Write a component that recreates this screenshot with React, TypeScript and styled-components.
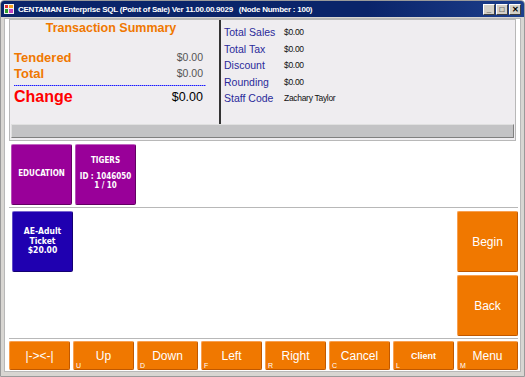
import type { FC } from 'react'
import styled, { createGlobalStyle } from 'styled-components'

const GlobalStyle = createGlobalStyle`
  html, body {
    margin: 0;
    padding: 0;
    background: #ffffff;
    font-family: "Liberation Sans", Arial, sans-serif;
  }
`

const Window = styled.div`
  width: 525px;
  height: 377px;
  box-sizing: border-box;
  display: flex;
  flex-direction: column;
  background: #d8d6d2;
  border: 1px solid #9a9a9a;
  border-radius: 4px 4px 0 0;
  overflow: hidden;
`

const TitleBar = styled.div`
  height: 16px;
  flex: none;
  display: flex;
  align-items: center;
  padding: 0 3px 0 3px;
  gap: 4px;
  background: linear-gradient(90deg, #0a246a 0%, #0a246a 70%, #1d3f8c 100%);
  color: #ffffff;
  font-family: "Liberation Sans", Arial, sans-serif;
  font-weight: bold;
  font-size: 8px;
  letter-spacing: -0.25px;
  white-space: pre;
`

const TitleText = styled.span`
  flex: 1;
`

const WinButtons = styled.div`
  display: flex;
  gap: 1px;
`

const WinButton = styled.div`
  width: 10px;
  height: 9px;
  background: #d4d0c8;
  border: 1px solid;
  border-color: #ffffff #404040 #404040 #ffffff;
  color: #000;
  font-size: 8px;
  line-height: 9px;
  letter-spacing: 0;
  text-align: center;
`

const Body = styled.div`
  flex: 1;
  display: flex;
  flex-direction: column;
  margin: 1px 3px 4px 3px;
  background: #ffffff;
  border: 1px solid #b8b8b8;
  padding: 0 2px 0 4px;
  min-height: 0;
`

const Summary = styled.div`
  height: 122px;
  flex: none;
  display: flex;
  flex-direction: column;
  background: #efedf0;
  border: 1px solid #b8b8b8;
  box-sizing: border-box;
  margin-right: 2px;
`

const SummaryTop = styled.div`
  flex: 1;
  display: flex;
`

const Totals = styled.div`
  width: 192px;
  padding: 1px 13px 0 4px;
  border-right: 2px solid #333333;
  display: flex;
  flex-direction: column;
`

const SummaryTitle = styled.div`
  color: #f07800;
  font-weight: bold;
  font-size: 12.5px;
  line-height: 15px;
  text-align: center;
  margin-bottom: 13px;
  padding-left: 2px;
`

const Line = styled.div<{ $big?: boolean }>`
  display: flex;
  justify-content: space-between;
  align-items: center;
  height: ${p => (p.$big ? '22px' : '16px')};
  padding-right: 3px;
`

const Label = styled.span<{ $big?: boolean }>`
  color: ${p => (p.$big ? '#ff0000' : '#f07800')};
  font-weight: bold;
  font-size: ${p => (p.$big ? '16px' : '13px')};
`

const Amount = styled.span<{ $big?: boolean }>`
  color: ${p => (p.$big ? '#000000' : '#555555')};
  font-size: ${p => (p.$big ? '12.5px' : '10.5px')};
`

const Dashed = styled.div`
  height: 1px;
  margin: 4px 0 0 0;
  background: repeating-linear-gradient(90deg, #1a1aff 0 1px, #8c8cf8 1px 2px);
`

const Details = styled.div`
  flex: 1;
  padding: 4px 0 0 3px;
  display: grid;
  grid-template-columns: 60px 1fr;
  grid-auto-rows: 16.5px;
  align-items: center;
  align-content: start;
`

const DetailLabel = styled.span`
  color: #2a2a9a;
  font-size: 10.5px;
`

const DetailValue = styled.span`
  color: #111111;
  font-size: 8.5px;
  letter-spacing: -0.3px;
`

const GreyBar = styled.div`
  height: 12px;
  flex: none;
  margin: 0 1px 2px 1px;
  background: #c3c3c5;
  border: 1px solid;
  border-color: #e0e0e0 #808080 #808080 #e0e0e0;
`

const Categories = styled.div`
  height: 66px;
  flex: none;
  display: flex;
  gap: 3px;
  align-items: center;
  padding: 0 2px 0 2px;
  border-bottom: 1px solid #b8b8b8;
`

const Tile = styled.div<{ $bg: string; $size?: string }>`
  width: 61px;
  height: 61px;
  box-sizing: border-box;
  display: flex;
  flex-direction: column;
  align-items: center;
  justify-content: center;
  text-align: center;
  background: ${p => p.$bg};
  border-radius: 2px;
  border: 1px solid rgba(0, 0, 0, 0.35);
  border-top-color: rgba(255, 255, 255, 0.4);
  border-left-color: rgba(255, 255, 255, 0.3);
  color: #ffffff;
  font-family: "DejaVu Sans Condensed", "DejaVu Sans", sans-serif;
  font-weight: bold;
  font-size: ${p => p.$size ?? '8px'};
  line-height: 1.1;
  white-space: pre;
`

const Spacer = styled.div`
  height: 7px;
`

const Products = styled.div`
  flex: 1;
  display: flex;
  justify-content: space-between;
  padding: 3px 0 3px 3px;
  min-height: 0;
`

const ProductGrid = styled.div`
  display: flex;
  align-items: flex-start;
  gap: 3px;
`

const SideButtons = styled.div`
  display: flex;
  flex-direction: column;
  gap: 3px;
`

const OrangeButton = styled.div<{ $h?: string; $size?: string; $bold?: boolean; $fill?: boolean }>`
  width: ${p => (p.$fill ? 'auto' : '61px')};
  flex: ${p => (p.$fill ? '1' : 'none')};
  height: ${p => p.$h ?? '61px'};
  box-sizing: border-box;
  position: relative;
  display: flex;
  align-items: center;
  justify-content: center;
  background: #f07800;
  border-radius: 2px;
  border: 1px solid #c05800;
  border-top-color: #f8a050;
  border-left-color: #f8a050;
  color: #ffffff;
  font-size: ${p => p.$size ?? '12px'};
  font-weight: ${p => (p.$bold ? 'bold' : 'normal')};
`

const Hotkey = styled.span`
  position: absolute;
  left: 2px;
  bottom: 0px;
  font-size: 7px;
  font-weight: normal;
  color: #ffffff;
`

const BottomBar = styled.div`
  height: 33px;
  box-sizing: border-box;
  flex: none;
  display: flex;
  gap: 3px;
  align-items: flex-start;
  padding-top: 2px;
  border-top: 1px solid #b8b8b8;
`

const AppIcon: FC = () => (
  <svg width="10" height="10" viewBox="0 0 10 10">
    <rect x="0" y="0" width="10" height="10" fill="#f4f4f4" />
    <rect x="1" y="1" width="3" height="3" fill="#e03030" />
    <rect x="5" y="1" width="4" height="3" fill="#f0a020" />
    <rect x="1" y="5" width="3" height="4" fill="#30a030" />
    <rect x="5" y="5" width="4" height="4" fill="#c040c0" />
  </svg>
)

const bottom = [
  { label: '|-><-|', key: '' },
  { label: 'Up', key: 'U' },
  { label: 'Down', key: 'D' },
  { label: 'Left', key: 'F' },
  { label: 'Right', key: 'R' },
  { label: 'Cancel', key: 'C' },
  { label: 'Client', key: 'L', small: true },
  { label: 'Menu', key: 'M' },
]

const App: FC = () => {
  return (
    <>
      <GlobalStyle />
      <Window>
        <TitleBar>
          <AppIcon />
          <TitleText>CENTAMAN Enterprise SQL (Point of Sale) Ver 11.00.00.9029   (Node Number : 100)</TitleText>
          <WinButtons>
            <WinButton>_</WinButton>
            <WinButton>□</WinButton>
            <WinButton>✕</WinButton>
          </WinButtons>
        </TitleBar>
        <Body>
          <Summary>
            <SummaryTop>
              <Totals>
                <SummaryTitle>Transaction Summary</SummaryTitle>
                <Line>
                  <Label>Tendered</Label>
                  <Amount>$0.00</Amount>
                </Line>
                <Line>
                  <Label>Total</Label>
                  <Amount>$0.00</Amount>
                </Line>
                <Dashed />
                <Line $big>
                  <Label $big>Change</Label>
                  <Amount $big>$0.00</Amount>
                </Line>
              </Totals>
              <Details>
                <DetailLabel>Total Sales</DetailLabel>
                <DetailValue>$0.00</DetailValue>
                <DetailLabel>Total Tax</DetailLabel>
                <DetailValue>$0.00</DetailValue>
                <DetailLabel>Discount</DetailLabel>
                <DetailValue>$0.00</DetailValue>
                <DetailLabel>Rounding</DetailLabel>
                <DetailValue>$0.00</DetailValue>
                <DetailLabel>Staff Code</DetailLabel>
                <DetailValue>Zachary Taylor</DetailValue>
              </Details>
            </SummaryTop>
            <GreyBar />
          </Summary>
          <Categories>
            <Tile $bg="#990099">EDUCATION</Tile>
            <Tile $bg="#990099">
              TIGERS
              <Spacer />
              {'ID : 1046050\n1 / 10'}
            </Tile>
          </Categories>
          <Products>
            <ProductGrid>
              <Tile $bg="#1f00b0" $size="8.5px">{'AE-Adult\nTicket\n$20.00'}</Tile>
            </ProductGrid>
            <SideButtons>
              <OrangeButton>Begin</OrangeButton>
              <OrangeButton>Back</OrangeButton>
            </SideButtons>
          </Products>
          <BottomBar>
            {bottom.map(b => (
              <OrangeButton key={b.label} $fill $h="29px" $size={b.small ? '9px' : '12px'} $bold={b.small}>
                {b.label}
                {b.key && <Hotkey>{b.key}</Hotkey>}
              </OrangeButton>
            ))}
          </BottomBar>
        </Body>
      </Window>
    </>
  )
}

export default App
